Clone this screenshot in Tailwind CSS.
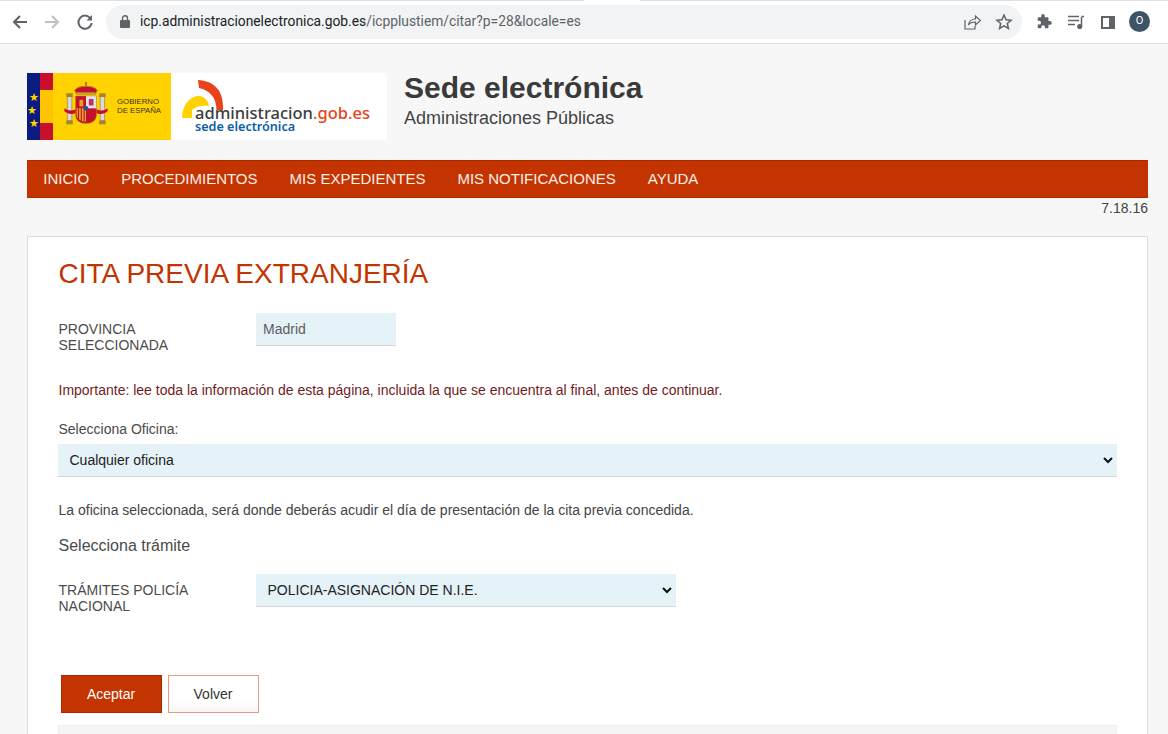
<!DOCTYPE html>
<html lang="es">
<head>
<meta charset="utf-8">
<title>Sede electrónica</title>
<script src="https://cdn.jsdelivr.net/npm/@tailwindcss/browser@4"></script>
</head>
<body class="w-[1168px] h-[734px] overflow-hidden bg-[#f7f7f7] font-['Liberation_Sans',Arial,sans-serif] text-[#333]">
<!-- browser toolbar -->
<div class="h-[44px] bg-white border-b border-[#dfe1e5] flex items-center relative">
  <div class="absolute top-0 left-0 w-[584px] h-px bg-[#dee1e6]"></div>
  <div class="absolute top-0 left-[640px] right-0 h-px bg-[#dee1e6]"></div>
  <svg class="ml-[11px] w-[18px] h-[18px]" viewBox="0 0 18 18" fill="none" stroke="#5f6368" stroke-width="2"><path d="M16 9H3M9 3 3 9l6 6"/></svg>
  <svg class="ml-[14px] w-[18px] h-[18px]" viewBox="0 0 18 18" fill="none" stroke="#bdc1c6" stroke-width="2"><path d="M2 9h13M9 3l6 6-6 6"/></svg>
  <svg class="ml-[15px] w-[18px] h-[18px]" viewBox="0 0 18 18" fill="none" stroke="#5f6368" stroke-width="2"><path d="M14.500 5.500A6.600 6.600 0 1 0 15.600 10"/><path d="M16 2v5.500h-5.500" fill="#5f6368" stroke="none"/></svg>
  <div class="ml-[12px] w-[916px] h-[34px] rounded-full bg-[#f1f3f4] flex items-center relative">
    <svg class="ml-[14px] w-[10px] h-[13px]" viewBox="0 0 10 13"><path fill="#5f6368" d="M1 5h8a1 1 0 0 1 1 1v6a1 1 0 0 1-1 1H1a1 1 0 0 1-1-1V6a1 1 0 0 1 1-1Z"/><path fill="none" stroke="#5f6368" stroke-width="1.400" d="M2.500 5V3.200a2.500 2.500 0 0 1 5 0V5"/></svg>
    <span class="ml-[10px] text-[13.800px] font-['Roboto',sans-serif] text-[#202124] whitespace-nowrap">icp.administracionelectronica.gob.es<span class="text-[#5f6368]">/icpplustiem/citar?p=28&amp;locale=es</span></span>
    <svg class="absolute left-[857px] top-[8px] w-[18px] h-[18px]" viewBox="0 0 18 18" fill="none" stroke="#5f6368" stroke-width="1.200"><path d="M2 7v9h10v-3"/><path d="M5.500 12c.5-4 3-6 7-6V3l5 4.500-5 4.500V9c-3 0-5.500.6-7 3Z"/></svg>
    <svg class="absolute left-[889px] top-[8px] w-[18px] h-[18px]" viewBox="0 0 18 18" fill="none" stroke="#5f6368" stroke-width="1.500"><path d="m9 2 2.100 4.700 5 .5-3.800 3.300 1.100 5L9 12.900l-4.400 2.600 1.100-5-3.800-3.300 5-.5Z"/></svg>
  </div>
  <svg class="absolute left-[1037px] top-[14px] w-[15px] h-[15px]" viewBox="0 0 15.500 16"><path fill="#5f6368" d="M13.500 7.500H12V4.500a1 1 0 0 0-1-1H8V2a1.900 1.900 0 0 0-3.800 0v1.500H1.500a1 1 0 0 0-1 1v2.800H2a2 2 0 0 1 0 4H.5v2.800a1 1 0 0 0 1 1h2.800V14a2 2 0 0 1 4 0v1.100H11a1 1 0 0 0 1-1v-2.600h1.500a2 2 0 0 0 0-4Z"/></svg>
  <svg class="absolute left-[1067px] top-[14px] w-[18px] h-[16px]" viewBox="0 0 18 16" fill="none" stroke="#5f6368" stroke-width="1.500"><path d="M1 2.500h11M1 6.500h11M1 10.500h7"/><path d="M14.500 3v9.500"/><path d="M14.500 2.500H17"/><circle cx="12.700" cy="12.500" r="1.800" fill="#5f6368"/></svg>
  <div class="absolute left-[1101px] top-[16px] w-[14px] h-[13px] border-2 border-[#5f6368] border-r-[6px] bg-white"></div>
  <div class="absolute left-[1129px] top-[11px] w-[21px] h-[21px] rounded-full bg-[#3c5464] text-white text-[11px] flex items-center justify-center font-['Roboto',sans-serif]">O</div>
</div>
<!-- page -->
<div class="px-[27px]">
  <header class="h-[116px] pt-[29px] flex">
    <!-- Gobierno logo -->
    <div class="w-[144px] h-[67px] bg-[#ffd200] relative overflow-hidden flex">
      <div class="w-[13px] h-full bg-[#0a1c80] flex flex-col items-center justify-center text-[#ffd200] text-[11px] leading-[13px] pt-[7px]"><span>★</span><span class="-ml-[4px]">★</span><span>★</span></div>
      <div class="w-[13px] h-full bg-[linear-gradient(#c8102e_0,#c8102e_25%,#ffc400_25%,#ffc400_75%,#c8102e_75%)]"></div>
      <svg class="ml-[10px] mt-[9px] w-[46px] h-[47px]" viewBox="0 0 46 50">
        <rect x="3" y="15" width="5" height="26" fill="#d9d9d9" stroke="#8a6d2f" stroke-width=".6"/>
        <rect x="38" y="15" width="5" height="26" fill="#d9d9d9" stroke="#8a6d2f" stroke-width=".6"/>
        <rect x="2" y="12" width="7" height="4" fill="#a8842a"/><rect x="37" y="12" width="7" height="4" fill="#a8842a"/>
        <rect x="2" y="41" width="7" height="4" fill="#a8842a"/><rect x="37" y="41" width="7" height="4" fill="#a8842a"/>
        <path d="M0 28c4 3 8 3 12 1v4c-4 2-8 1-12-2ZM46 28c-4 3-8 3-12 1v4c4 2 8 1 12-2Z" fill="#c8102e"/>
        <path d="M11 9c2-6 22-6 24 0l-2 4H13Z" fill="#c8102e" stroke="#b58b1f"/>
        <rect x="13" y="11" width="20" height="3" fill="#c9a227"/>
        <path d="M23 0v4" stroke="#7a5c14" stroke-width="1.500"/>
        <path d="M12 15h22v20c0 6-5 9-11 9s-11-3-11-9Z" fill="#c8102e" stroke="#8a6d2f" stroke-width=".5"/>
        <rect x="23" y="15" width="11" height="13" fill="#e8e3e3"/>
        <path d="M26 18h5v7h-5Z" fill="#b8336a"/>
        <rect x="16" y="19" width="4" height="7" fill="#d8a520"/>
        <path d="M13 28h10v14c-6 0-10-3-10-8Z" fill="#e2a81f"/>
        <path d="M15 28v13M18 28v14M21 28v14" stroke="#c8102e" stroke-width="1.200"/>
        <circle cx="23" cy="28" r="2.500" fill="#2a4f9c"/>
      </svg>
      <div class="ml-[8px] mt-[24px] text-[7.800px] leading-[9px] text-[#3a3320] whitespace-nowrap">GOBIERNO<br>DE ESPAÑA</div>
    </div>
    <!-- administracion logo -->
    <div class="w-[216px] h-[67px] bg-white relative overflow-hidden">
      <svg class="absolute left-0 top-0 w-[216px] h-[67px]" viewBox="171 73 216 67">
        <path d="M198 80C214 81 224 90 223 110L216.500 110C216.500 97 209 90 199 88Z" fill="#e8431b"/>
        <path d="M182 118C182 103 192 95 200 96C205 97 208 101 209 106C203 105 196 106 192 110L192 118Z" fill="#ffd200"/>
      </svg>
      <div class="absolute left-[24px] top-[33px] text-[16.500px] leading-[14px] font-['Noto_Sans',sans-serif] font-medium text-[#3c3c3c] whitespace-nowrap">administracion<span class="text-[#e8431b]">.gob.es</span></div>
      <div class="absolute left-[24px] top-[47px] text-[12.600px] leading-[14px] font-['Noto_Sans',sans-serif] font-semibold text-[#0b5ea8] whitespace-nowrap">sede electrónica</div>
    </div>
    <div class="ml-[17px] -mt-[2px]">
      <h1 class="text-[30px] leading-[34px] font-bold text-[#3a3a3a]">Sede electrónica</h1>
      <p class="text-[18px] leading-[24px] mt-[1px] text-[#444]">Administraciones Públicas</p>
    </div>
  </header>
  <nav class="h-[38px] bg-[#c43400] border-y border-[#a92c00] flex items-center gap-[32px] pl-[16.300px] text-[15px] text-[#fdf0ea] w-[1121px]">
    <span>INICIO</span><span>PROCEDIMIENTOS</span><span>MIS EXPEDIENTES</span><span>MIS NOTIFICACIONES</span><span>AYUDA</span>
  </nav>
  <div class="w-[1121px] text-right text-[14px] leading-[20px] text-[#444] h-[38px]">7.18.16</div>
  <main class="w-[1121px] h-[498px] overflow-hidden bg-white border border-[#dcdcdc] border-b-0 px-[30.500px] text-[14px] text-[#444]">
    <h2 class="mt-[21px] text-[28px] leading-[32px] text-[#c43400]">CITA PREVIA EXTRANJERÍA</h2>
    <div class="mt-[23px] flex">
      <div class="w-[197px] pt-[8px] leading-[16px] text-[#4c4c4c]">PROVINCIA<br>SELECCIONADA</div>
      <div class="w-[140px] h-[33px] bg-[#e5f2f7] border-b border-[#d3d8da] pl-[7.500px] leading-[32px] text-[#5e5e5e]">Madrid</div>
    </div>
    <p class="mt-[28px] leading-[18px] text-[#711c24]">Importante: lee toda la información de esta página, incluida la que se encuentra al final, antes de continuar.</p>
    <p class="mt-[21px] leading-[18px] text-[#4a4a4a]">Selecciona Oficina:</p>
    <div class="mt-[6px] w-[1059px] h-[33px] bg-[#e5f2f7] border-b border-[#d3d8da] flex items-center justify-between pl-[12px] pr-[4px] text-[#222] -ml-px">
      <span>Cualquier oficina</span>
      <svg class="w-[10px] h-[7px]" viewBox="0 0 10 7" fill="none" stroke="#111" stroke-width="2"><path d="m1 1 4 4 4-4"/></svg>
    </div>
    <p class="mt-[24px] leading-[18px] text-[#444]">La oficina seleccionada, será donde deberás acudir el día de presentación de la cita previa concedida.</p>
    <p class="mt-[17px] text-[16px] leading-[20px] text-[#4a4a4a]">Selecciona trámite</p>
    <div class="mt-[18px] flex">
      <div class="w-[197px] pt-[8px] leading-[16px] text-[#4c4c4c]">TRÁMITES POLICÍA<br>NACIONAL</div>
      <div class="w-[420px] h-[33px] bg-[#e5f2f7] border-b border-[#d3d8da] flex items-center justify-between pl-[12px] pr-[4px] text-[#222]">
        <span>POLICIA-ASIGNACIÓN DE N.I.E.</span>
        <svg class="w-[10px] h-[7px]" viewBox="0 0 10 7" fill="none" stroke="#111" stroke-width="2"><path d="m1 1 4 4 4-4"/></svg>
      </div>
    </div>
    <div class="mt-[61px] flex gap-[6px] ml-[2px]">
      <div class="w-[101px] h-[38px] bg-[#c43400] border border-[#a92c00] text-white flex items-center justify-center">Aceptar</div>
      <div class="w-[91px] h-[38px] bg-[linear-gradient(#fff_70%,#f5f5f5)] border border-[#e89a80] text-[#333] flex items-center justify-center">Volver</div>
    </div>
    <div class="mt-[12px] w-[1059px] h-[9px] bg-[#f5f5f5] border border-b-0 border-[#eeeeee] -ml-px"></div>
  </main>
</div>
</body>
</html>
